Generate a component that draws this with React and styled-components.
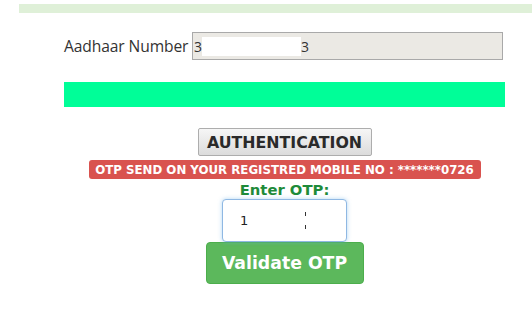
import React from 'react';
import styled, { createGlobalStyle } from 'styled-components';

const GlobalStyle = createGlobalStyle`
    html, body {
        margin: 0;
        padding: 0;
        background: #fff;
    }
    body {
        font-family: 'DejaVu Sans', Verdana, sans-serif;
    }
`

const Page = styled.div`
    width: 532px;
    height: 309px;
    padding-top: 4px;
    box-sizing: border-box;
    overflow: hidden;
`

const TopStrip = styled.div`
    margin-left: 19px;
    height: 9px;
    background: #dff0d8;
`

const Content = styled.div`
    width: 441px;
    margin: 19px 0 0 64px;
    display: flex;
    flex-direction: column;
    align-items: center;
`

const FieldRow = styled.div`
    align-self: stretch;
    display: flex;
    align-items: center;
    padding-right: 2px;
`

const Label = styled.span`
    font-family: 'Open Sans', sans-serif;
    font-size: 15.6px;
    color: #333;
    width: 128px;
    white-space: nowrap;
    letter-spacing: -0.1px;
`

const ReadOnlyBox = styled.div`
    flex: 1;
    height: 28px;
    box-sizing: border-box;
    border: 1px solid #a9a9a9;
    background: #ebe9e4;
    display: flex;
    align-items: center;
    padding-left: 1px;
    font-family: 'Open Sans', sans-serif;
    font-size: 14px;
    color: #333;
`

const Mask = styled.span`
    display: inline-block;
    width: ${p => p.w}px;
    height: ${p => p.h}px;
    background: #fff;
`

const StatusBar = styled.div`
    align-self: stretch;
    height: 25px;
    margin-top: 22px;
    background: #00fe98;
`

const AuthButton = styled.button`
    margin-top: 21px;
    width: 174px;
    height: 28px;
    border: 1px solid #adadad;
    border-radius: 2px;
    background: linear-gradient(#f6f6f6, #dcdcdc);
    font-family: 'DejaVu Sans', Verdana, sans-serif;
    font-weight: bold;
    font-size: 15.8px;
    color: #2a2a2a;
    padding: 0;
`

const Badge = styled.div`
    margin-top: 4px;
    width: 392px;
    height: 19px;
    box-sizing: border-box;
    border-radius: 3px;
    background: #d9534f;
    color: #fff;
    font-weight: bold;
    font-size: 11.8px;
    display: flex;
    align-items: center;
    justify-content: center;
    white-space: nowrap;
`

const OtpLabel = styled.div`
    margin-top: 1px;
    font-weight: bold;
    font-size: 14.8px;
    color: #1e8b3a;
    line-height: 19px;
`

const OtpBox = styled.div`
    width: 125px;
    height: 43px;
    box-sizing: border-box;
    border: 1px solid #8fb8e3;
    border-radius: 4px;
    box-shadow: 0 0 4px rgba(102, 175, 233, 0.5);
    background: #fff;
    display: flex;
    align-items: center;
    padding-left: 17px;
    font-size: 13px;
    color: #222;
    position: relative;
`

const Caret = styled.span`
    position: absolute;
    left: 82px;
    top: ${p => p.top}px;
    width: 1px;
    height: 4px;
    background: #333;
`

const ValidateButton = styled.button`
    width: 158px;
    height: 42px;
    border: 1px solid #4cae4c;
    border-radius: 4px;
    background: #5cb85c;
    color: #fff;
    font-family: 'DejaVu Sans', Verdana, sans-serif;
    font-weight: bold;
    font-size: 17.3px;
    padding: 0;
`

export default function App() {
    return (
        <Page>
            <GlobalStyle />
            <TopStrip />
            <Content>
                <FieldRow>
                    <Label>Aadhaar Number</Label>
                    <ReadOnlyBox>
                        3<Mask w={99} h={19} />3
                    </ReadOnlyBox>
                </FieldRow>
                <StatusBar />
                <AuthButton>AUTHENTICATION</AuthButton>
                <Badge>OTP SEND ON YOUR REGISTRED MOBILE NO : *******0726</Badge>
                <OtpLabel>Enter OTP:</OtpLabel>
                <OtpBox>
                    1
                    <Caret top={12} />
                    <Caret top={25} />
                </OtpBox>
                <ValidateButton>Validate OTP</ValidateButton>
            </Content>
        </Page>
    );
}
